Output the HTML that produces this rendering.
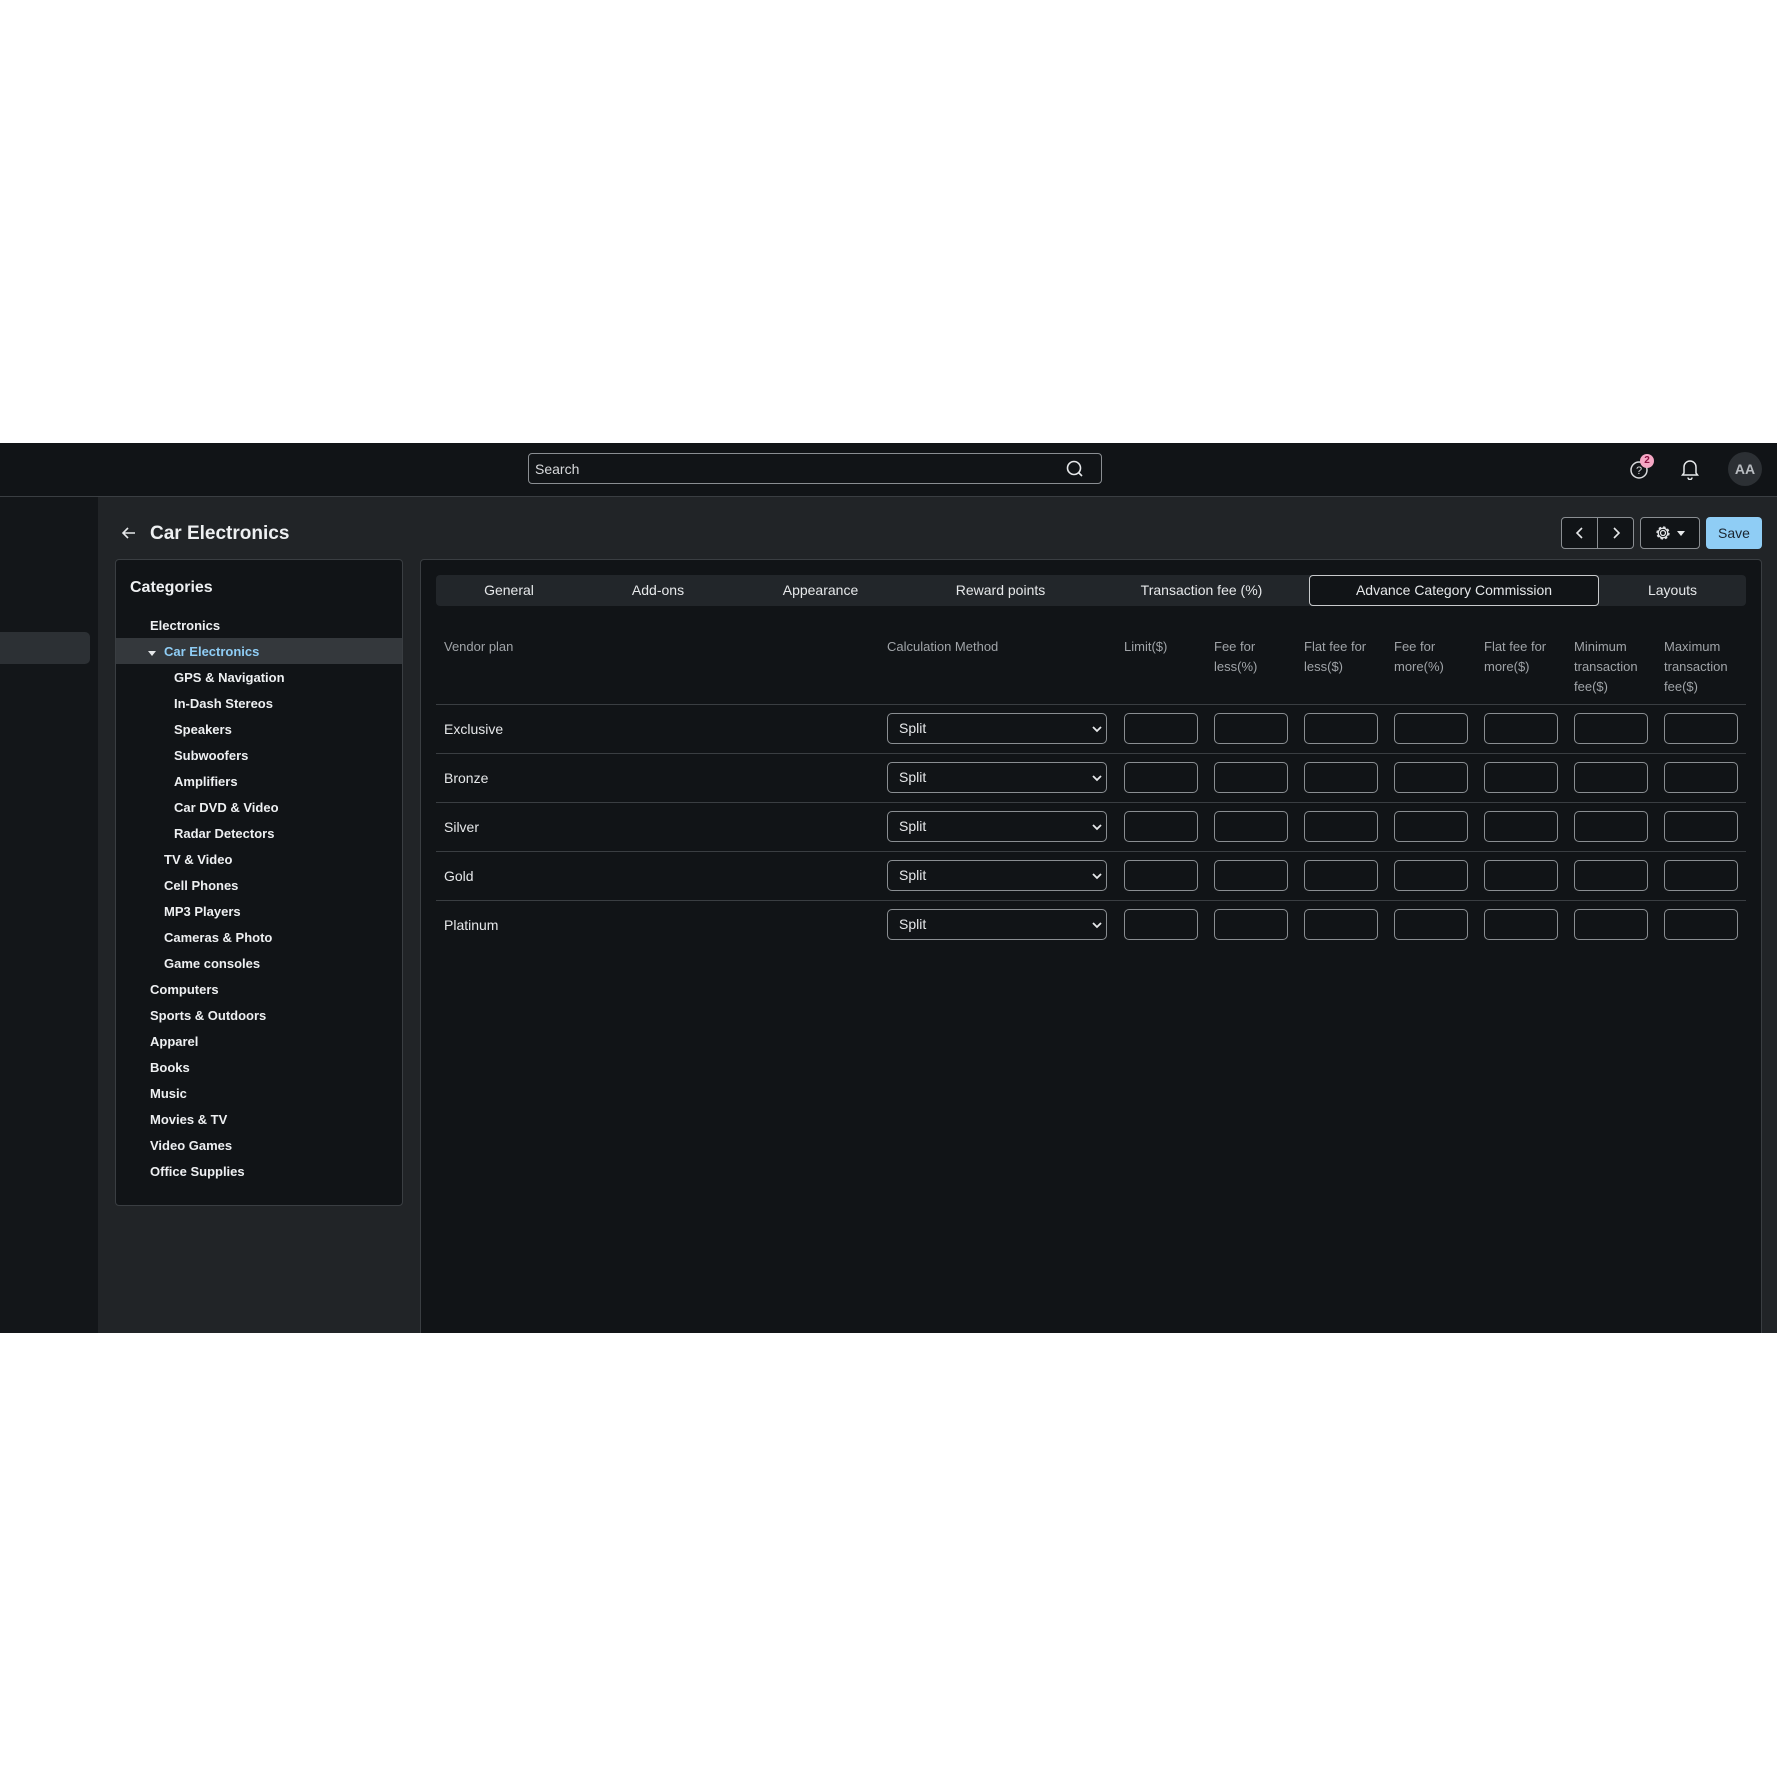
<!DOCTYPE html>
<html><head><meta charset="utf-8"><style>
*{box-sizing:border-box;margin:0;padding:0}
body{width:1777px;height:1777px;background:#fff;font-family:"Liberation Sans",sans-serif;position:relative;overflow:hidden;color:#e6e8ea}
.a{position:absolute}
.hdr{left:0;top:443px;width:1777px;height:54px;background:#111417;border-bottom:1px solid #3a3e42}
.side{left:0;top:497px;width:98px;height:836px;background:#131619}
.main{left:98px;top:497px;width:1679px;height:836px;background:#212427}
.panel{background:#111417;border:1px solid #3a3e42;border-radius:4px}
.tree div{position:absolute;font-size:13px;font-weight:bold;color:#eef0f2;white-space:nowrap}
.tab{position:absolute;top:575px;height:31px;line-height:31px;font-size:14px;color:#e6e8ea;text-align:center}
.th{position:absolute;top:637px;font-size:13px;line-height:20px;color:#a0a4a8}
.inp{position:absolute;width:74px;height:31px;border:1px solid #8a8e92;border-radius:5px;background:#111417}
.sel{position:absolute;left:887px;width:220px;height:31px;border:1px solid #8a8e92;border-radius:5px;background:#111417;font-size:14px;line-height:29px;padding-left:11px;color:#e6e8ea}
.line{position:absolute;left:436px;width:1310px;height:1px;background:#3a3e42}
.rl{position:absolute;left:444px;font-size:14px;color:#e6e8ea}
</style></head><body>
<div class="a hdr"></div>
<div class="a" style="left:528px;top:453px;width:574px;height:31px;border:1px solid #8a8e92;border-radius:4px;background:#111417"></div>
<div class="a" style="left:535px;top:461px;font-size:14px;color:#d8dadc">Search</div>
<svg class="a" style="left:1065px;top:459px" width="20" height="20" viewBox="0 0 20 20"><circle cx="9" cy="9" r="6.5" fill="none" stroke="#e6e8ea" stroke-width="1.6"/><line x1="13.5" y1="13.5" x2="17" y2="17" stroke="#e6e8ea" stroke-width="1.6"/></svg>
<svg class="a" style="left:1629px;top:458px" width="24" height="24" viewBox="0 0 24 24"><circle cx="10" cy="12" r="8" fill="none" stroke="#d8dadc" stroke-width="1.5" stroke-dasharray="40 6"/><text x="7" y="16" font-size="11" fill="#d8dadc" font-family="Liberation Sans">?</text></svg>
<div class="a" style="left:1640px;top:454px;width:14px;height:14px;border-radius:7px;background:#f5a7c4;color:#8a1040;font-size:10px;font-weight:bold;text-align:center;line-height:14px">2</div>
<svg class="a" style="left:1680px;top:458px" width="20" height="22" viewBox="0 0 20 22"><path d="M4 15 V9 a6 6 0 0 1 12 0 V15 L17.5 17 H2.5 Z" fill="none" stroke="#e6e8ea" stroke-width="1.5"/><path d="M8 19.5 a2 2 0 0 0 4 0" fill="none" stroke="#e6e8ea" stroke-width="1.5"/></svg>
<div class="a" style="left:1728px;top:452px;width:34px;height:34px;border-radius:17px;background:#2c3034;color:#b8bcc0;font-size:14px;font-weight:bold;text-align:center;line-height:34px">AA</div>

<div class="a side"></div>
<div class="a" style="left:0;top:632px;width:90px;height:32px;background:#2c3034;border-radius:0 5px 5px 0"></div>
<div class="a main"></div>

<svg class="a" style="left:120px;top:524px" width="18" height="18" viewBox="0 0 18 18"><path d="M15 9 H3 M8 4 L3 9 L8 14" fill="none" stroke="#e6e8ea" stroke-width="1.6"/></svg>
<div class="a" style="left:150px;top:523px;font-size:19px;font-weight:bold;color:#eef0f2">Car Electronics</div>

<div class="a" style="left:1561px;top:517px;width:73px;height:32px;border:1px solid #8a8e92;border-radius:4px;background:#111417"></div>
<div class="a" style="left:1597px;top:517px;width:1px;height:32px;background:#8a8e92"></div>
<svg class="a" style="left:1572px;top:525px" width="16" height="16" viewBox="0 0 16 16"><path d="M10 3 L5 8 L10 13" fill="none" stroke="#e6e8ea" stroke-width="1.6"/></svg>
<svg class="a" style="left:1608px;top:525px" width="16" height="16" viewBox="0 0 16 16"><path d="M6 3 L11 8 L6 13" fill="none" stroke="#e6e8ea" stroke-width="1.6"/></svg>
<div class="a" style="left:1640px;top:517px;width:60px;height:32px;border:1px solid #8a8e92;border-radius:4px;background:#111417"></div>
<svg class="a" style="left:1654px;top:524px" width="18" height="18" viewBox="0 0 18 18"><circle cx="9" cy="9" r="2.5" fill="none" stroke="#e6e8ea" stroke-width="1.3"/><circle cx="9" cy="9" r="6" fill="none" stroke="#e6e8ea" stroke-width="1.3" stroke-dasharray="2.5 2.2"/><circle cx="9" cy="9" r="4.8" fill="none" stroke="#e6e8ea" stroke-width="1.3"/></svg>
<div class="a" style="left:1677px;top:531px;border-left:4px solid transparent;border-right:4px solid transparent;border-top:5px solid #e6e8ea"></div>
<div class="a" style="left:1706px;top:517px;width:56px;height:32px;border-radius:4px;background:#8fcdf5;color:#1a2530;font-size:14px;text-align:center;line-height:32px">Save</div>

<div class="a panel" style="left:115px;top:559px;width:288px;height:647px"></div>
<div class="a" style="left:130px;top:579px;font-size:16px;font-weight:bold;color:#eef0f2">Categories</div>
<div class="a" style="left:116px;top:638px;width:286px;height:26px;background:#34383c"></div>
<div class="tree">
<div style="left:150px;top:618px">Electronics</div>
<div style="left:164px;top:644px;color:#8fcdf5">Car Electronics</div>
<div style="left:174px;top:670px">GPS &amp; Navigation</div>
<div style="left:174px;top:696px">In-Dash Stereos</div>
<div style="left:174px;top:722px">Speakers</div>
<div style="left:174px;top:748px">Subwoofers</div>
<div style="left:174px;top:774px">Amplifiers</div>
<div style="left:174px;top:800px">Car DVD &amp; Video</div>
<div style="left:174px;top:826px">Radar Detectors</div>
<div style="left:164px;top:852px">TV &amp; Video</div>
<div style="left:164px;top:878px">Cell Phones</div>
<div style="left:164px;top:904px">MP3 Players</div>
<div style="left:164px;top:930px">Cameras &amp; Photo</div>
<div style="left:164px;top:956px">Game consoles</div>
<div style="left:150px;top:982px">Computers</div>
<div style="left:150px;top:1008px">Sports &amp; Outdoors</div>
<div style="left:150px;top:1034px">Apparel</div>
<div style="left:150px;top:1060px">Books</div>
<div style="left:150px;top:1086px">Music</div>
<div style="left:150px;top:1112px">Movies &amp; TV</div>
<div style="left:150px;top:1138px">Video Games</div>
<div style="left:150px;top:1164px">Office Supplies</div>
</div>
<div class="a" style="left:148px;top:651px;border-left:4px solid transparent;border-right:4px solid transparent;border-top:5px solid #e6e8ea"></div>

<div class="a panel" style="left:420px;top:559px;width:1342px;height:790px"></div>
<div class="a" style="left:436px;top:575px;width:1310px;height:31px;background:#22262a;border-radius:4px"></div>
<div class="a" style="left:1309px;top:575px;width:290px;height:31px;background:#111417;border:1px solid #c8cacc;border-radius:4px"></div>
<div class="tab" style="left:436px;width:146px">General</div>
<div class="tab" style="left:582px;width:152px">Add-ons</div>
<div class="tab" style="left:734px;width:173px">Appearance</div>
<div class="tab" style="left:907px;width:187px">Reward points</div>
<div class="tab" style="left:1094px;width:215px">Transaction fee (%)</div>
<div class="tab" style="left:1309px;width:290px">Advance Category Commission</div>
<div class="tab" style="left:1599px;width:147px">Layouts</div>

<div class="th" style="left:444px">Vendor plan</div>
<div class="th" style="left:887px">Calculation Method</div>
<div class="th" style="left:1124px">Limit($)</div>
<div class="th" style="left:1214px">Fee for<br>less(%)</div>
<div class="th" style="left:1304px">Flat fee for<br>less($)</div>
<div class="th" style="left:1394px">Fee for<br>more(%)</div>
<div class="th" style="left:1484px">Flat fee for<br>more($)</div>
<div class="th" style="left:1574px">Minimum<br>transaction<br>fee($)</div>
<div class="th" style="left:1664px">Maximum<br>transaction<br>fee($)</div>

<div class="line" style="top:704px"></div>
<div class="line" style="top:753px"></div>
<div class="line" style="top:802px"></div>
<div class="line" style="top:851px"></div>
<div class="line" style="top:900px"></div>

<div class="rl" style="top:721px">Exclusive</div>
<div class="rl" style="top:770px">Bronze</div>
<div class="rl" style="top:819px">Silver</div>
<div class="rl" style="top:868px">Gold</div>
<div class="rl" style="top:917px">Platinum</div>

<div class="sel" style="top:713px">Split</div>
<div class="sel" style="top:762px">Split</div>
<div class="sel" style="top:811px">Split</div>
<div class="sel" style="top:860px">Split</div>
<div class="sel" style="top:909px">Split</div>
<svg class="a" style="left:1092px;top:724px" width="10" height="212" viewBox="0 0 10 212"><g fill="none" stroke="#e6e8ea" stroke-width="1.8"><path d="M1 3 L5 7 L9 3"/><path d="M1 52 L5 56 L9 52"/><path d="M1 101 L5 105 L9 101"/><path d="M1 150 L5 154 L9 150"/><path d="M1 199 L5 203 L9 199"/></g></svg>

<div class="inp" style="left:1124px;top:713px"></div><div class="inp" style="left:1214px;top:713px"></div><div class="inp" style="left:1304px;top:713px"></div><div class="inp" style="left:1394px;top:713px"></div><div class="inp" style="left:1484px;top:713px"></div><div class="inp" style="left:1574px;top:713px"></div><div class="inp" style="left:1664px;top:713px"></div>
<div class="inp" style="left:1124px;top:762px"></div><div class="inp" style="left:1214px;top:762px"></div><div class="inp" style="left:1304px;top:762px"></div><div class="inp" style="left:1394px;top:762px"></div><div class="inp" style="left:1484px;top:762px"></div><div class="inp" style="left:1574px;top:762px"></div><div class="inp" style="left:1664px;top:762px"></div>
<div class="inp" style="left:1124px;top:811px"></div><div class="inp" style="left:1214px;top:811px"></div><div class="inp" style="left:1304px;top:811px"></div><div class="inp" style="left:1394px;top:811px"></div><div class="inp" style="left:1484px;top:811px"></div><div class="inp" style="left:1574px;top:811px"></div><div class="inp" style="left:1664px;top:811px"></div>
<div class="inp" style="left:1124px;top:860px"></div><div class="inp" style="left:1214px;top:860px"></div><div class="inp" style="left:1304px;top:860px"></div><div class="inp" style="left:1394px;top:860px"></div><div class="inp" style="left:1484px;top:860px"></div><div class="inp" style="left:1574px;top:860px"></div><div class="inp" style="left:1664px;top:860px"></div>
<div class="inp" style="left:1124px;top:909px"></div><div class="inp" style="left:1214px;top:909px"></div><div class="inp" style="left:1304px;top:909px"></div><div class="inp" style="left:1394px;top:909px"></div><div class="inp" style="left:1484px;top:909px"></div><div class="inp" style="left:1574px;top:909px"></div><div class="inp" style="left:1664px;top:909px"></div>

<div class="a" style="left:0;top:1333px;width:1777px;height:444px;background:#fff"></div>
</body></html>
